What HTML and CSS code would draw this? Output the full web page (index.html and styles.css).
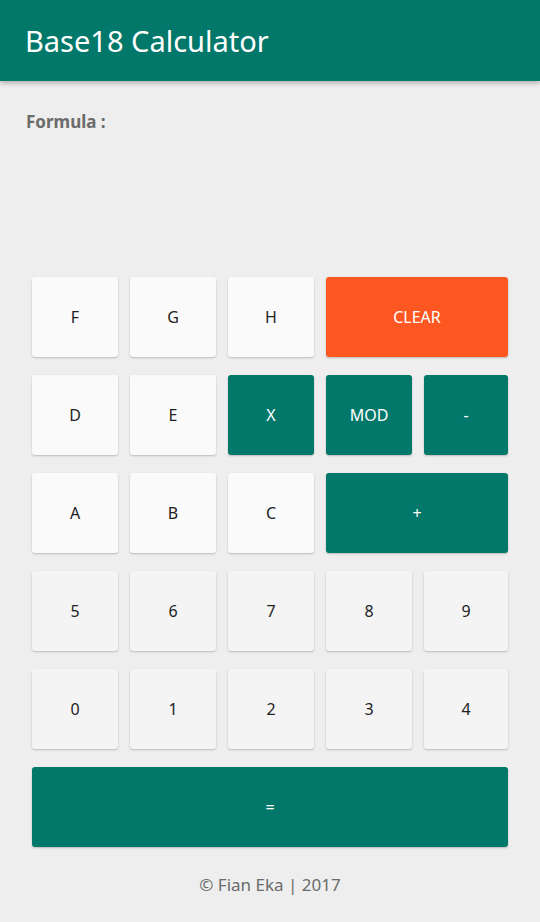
FILE: index.html
```html
<!DOCTYPE html>
<html>
<head>
<meta charset="utf-8">
<link rel="stylesheet" href="styles.css">
</head>
<body>
<header class="appbar">Base18 Calculator</header>
<main class="content">
  <div class="formula">Formula :</div>
  <div class="keys">
    <button class="key light">F</button>
    <button class="key light">G</button>
    <button class="key light">H</button>
    <button class="key clear span2">CLEAR</button>
    <button class="key light">D</button>
    <button class="key light">E</button>
    <button class="key teal">X</button>
    <button class="key teal">MOD</button>
    <button class="key teal">-</button>
    <button class="key light">A</button>
    <button class="key light">B</button>
    <button class="key light">C</button>
    <button class="key teal span2">+</button>
    <button class="key digit">5</button>
    <button class="key digit">6</button>
    <button class="key digit">7</button>
    <button class="key digit">8</button>
    <button class="key digit">9</button>
    <button class="key digit">0</button>
    <button class="key digit">1</button>
    <button class="key digit">2</button>
    <button class="key digit">3</button>
    <button class="key digit">4</button>
    <button class="key teal span5">=</button>
  </div>
  <footer class="footer">© Fian Eka | 2017</footer>
</main>
</body>
</html>
```
FILE: styles.css
```css
* { box-sizing: border-box; }
html, body { margin: 0; padding: 0; }
body {
  background: #eeeeee;
  font-family: "Noto Sans", "Open Sans", sans-serif;
  width: 540px;
  height: 922px;
  overflow: hidden;
}
.appbar {
  height: 81px;
  background: #02786a;
  color: #ffffff;
  font-size: 29px;
  line-height: 81px;
  padding-left: 25px;
  box-shadow: 0 2px 5px rgba(0,0,0,0.28);
  position: relative;
}
.content {
  padding: 0 32px;
}
.formula {
  margin-left: -6px;
  padding-top: 29px;
  font-size: 17px;
  font-weight: bold;
  color: #6b6b6b;
  line-height: 24px;
  height: 196px;
}
.keys {
  display: grid;
  grid-template-columns: 86px 86px 86px 86px 1fr;
  grid-auto-rows: 80px;
  column-gap: 12px;
  row-gap: 18px;
}
.key {
  border: none;
  border-radius: 3px;
  font-family: "Noto Sans", "Open Sans", sans-serif;
  font-size: 16px;
  padding: 0;
  box-shadow: 0 1px 2px rgba(0,0,0,0.22);
}
.light { background: #fafafa; color: #222222; }
.digit { background: #f4f4f4; color: #222222; }
.teal { background: #02786a; color: #ffffff; }
.clear { background: #ff5722; color: #ffffff; }
.span2 { grid-column: span 2; }
.span5 { grid-column: span 5; }
.footer {
  text-align: center;
  color: #6b6b6b;
  font-size: 17px;
  margin-top: 26px;
  line-height: 24px;
}
```
